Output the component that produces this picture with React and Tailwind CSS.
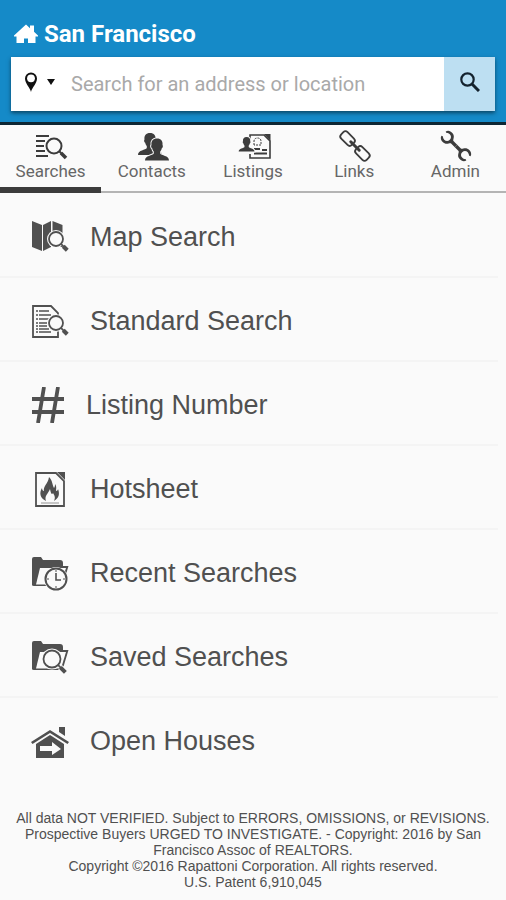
import React from "react";

function Lens({ cx, cy, r, dx }) {
  return (
    <g>
      <circle cx={cx} cy={cy} r={r + 2} fill="#fafafa" stroke="none" />
      <path
        d={`M${cx + r * 0.75 + 2} ${cy + r * 0.75 + 2}l${dx} ${dx}`}
        stroke="#fafafa"
        strokeWidth="6"
      />
      <circle cx={cx} cy={cy} r={r} fill="#fafafa" stroke="currentColor" strokeWidth="1.8" />
      <path d={`M${cx + r * 0.7} ${cy + r * 0.7}l3 3`} stroke="currentColor" strokeWidth="1.8" />
      <path d={`M${cx + r * 0.75 + 2} ${cy + r * 0.75 + 2}l${dx} ${dx}`} stroke="currentColor" strokeWidth="4" />
    </g>
  );
}

function HouseIcon() {
  return (
    <svg className="h-5 w-6" viewBox="0 0 24 20" fill="currentColor" aria-hidden="true">
      <path d="M0 11.500L12 .5l4 3.700V1.500h4v6.200l4 3.800v1h-2.500V19H14v-4.500h-4V19H2.500v-6.500H0z" />
    </svg>
  );
}

function PinIcon() {
  return (
    <svg className="h-5 w-3" viewBox="0 0 12 20" aria-hidden="true">
      <path d="M6 20C5 15.500 0 11.500 0 6.500a6 6 0 0112 0C12 11.500 7 15.500 6 20z" fill="#111" />
      <circle cx="6" cy="6.300" r="3.900" fill="#fff" />
    </svg>
  );
}

function SearchesIcon() {
  return (
    <svg className="h-7 w-8 overflow-visible" viewBox="0 0 32 28" fill="none" stroke="currentColor" aria-hidden="true">
      <path d="M1 5h13M1 10h9M1 15h8M1 20h9M1 25h12" strokeWidth="2.200" />
      <circle cx="19" cy="15" r="7.500" strokeWidth="2" />
      <path d="M24 20l3 3" strokeWidth="2" />
      <path d="M26 22l5 5" strokeWidth="3.500" />
    </svg>
  );
}

const PERSON =
  "M10 0c4 0 6 2.500 5.500 6.500.8.500.3 3-.7 3.200-.4 1.800-1 2.600-1.600 3.300v2c1 2 8.800 2 8.800 7H-2c0-5 7.800-5 8.800-7v-2c-.6-.7-1.200-1.500-1.600-3.300-1-.2-1.500-2.700-.7-3.200C4 2.500 6 0 10 0z";

function ContactsIcon() {
  return (
    <svg className="h-7 w-8 overflow-visible" viewBox="0 -2 32 28" fill="currentColor" aria-hidden="true">
      <path d={PERSON} transform="translate(4 0)" />
      <path d={PERSON} transform="translate(11 5.500)" stroke="#fafafa" strokeWidth="2" paintOrder="stroke" />
    </svg>
  );
}

function ListingsIcon() {
  return (
    <svg className="h-7 w-8 overflow-visible" viewBox="-1 -1 32 28" fill="none" stroke="currentColor" aria-hidden="true">
      <path d="M12 7V3h14l6 6v17H12v-4" strokeWidth="1.600" />
      <path d="M26 2h6.500v7z" fill="currentColor" stroke="none" />
      <path d="M16 13V9c0-4 7-4 7 0v4z" strokeWidth="1" strokeDasharray="2 1" />
      <path d="M16 17h6M24 18h5M16 21.500h13" strokeWidth="2.200" />
      <path
        d={PERSON}
        transform="translate(2 5) scale(.66)"
        fill="currentColor"
        stroke="#fafafa"
        strokeWidth="3"
        paintOrder="stroke"
      />
    </svg>
  );
}

function LinksIcon() {
  return (
    <svg className="h-8 w-8 overflow-visible" viewBox="-1 -1 32 32" fill="none" stroke="currentColor" strokeWidth="1.800" aria-hidden="true">
      <g transform="translate(16 16) rotate(45)">
        <rect x="-18" y="-4.500" width="15" height="9" rx="3" />
        <rect x="3" y="-4.500" width="15" height="9" rx="3" />
        <path d="M-6 0H6" strokeWidth="3" strokeLinecap="round" />
      </g>
    </svg>
  );
}

const JAW = "M0-1.900H6C8-2.500 8-7 13-7.500c3.500-.3 6 1 7 4l-1.500.8c-3.500-3-8.500-1.800-8.500 2.700s5 5.700 8.500 2.700l1.500.8c-1 3-3.500 4.300-7 4C8 7 8 2.500 6 1.900H0z";

function WrenchIcon() {
  return (
    <svg className="h-8 w-8 overflow-visible" viewBox="-1 -1 32 32" fill="currentColor" aria-hidden="true">
      <g transform="translate(16 16) rotate(45) scale(.88)">
        <path d={JAW} />
        <path d={JAW} transform="scale(-1 1)" />
      </g>
    </svg>
  );
}

function MapIcon() {
  return (
    <svg className="h-9 w-9 overflow-visible" viewBox="0 0 36 36" aria-hidden="true">
      <path d="M0 2l10 4v26l-10-4zM11 6l8-4v26l-8 4zM20.500 2l10 4v22l-10-1z" fill="currentColor" />
      <Lens cx={24} cy={20} r={7} dx={4} />
    </svg>
  );
}

function StandardIcon() {
  return (
    <svg className="h-9 w-9 overflow-visible" viewBox="0 -1 36 36" fill="none" stroke="currentColor" aria-hidden="true">
      <path d="M1 2h18l7 7v24H1z" strokeWidth="1.800" />
      <path d="M4 7h2m1 0h10M4 11h2m1 0h12M4 15h2m1 0h10M4 19h2m1 0h8M4 22h2m1 0h8M4 25h2m1 0h10M4 28h2m1 0h12" strokeWidth="1.500" />
      <Lens cx={24} cy={19} r={7} dx={4} />
    </svg>
  );
}

function HashIcon() {
  return (
    <svg className="h-9 w-8" viewBox="0 0 32 36" fill="none" stroke="currentColor" strokeWidth="3.800" aria-hidden="true">
      <path d="M12 0L6 36M26 0l-6 36M0 12h32M0 25h32" />
    </svg>
  );
}

function HotsheetIcon() {
  return (
    <svg className="h-9 w-9 overflow-visible" viewBox="0 -1 36 36" fill="none" stroke="currentColor" aria-hidden="true">
      <path d="M4 1h20l8 8v25H4z" strokeWidth="1.800" />
      <path d="M25 0h8v8z" fill="currentColor" stroke="none" />
      <path
        d="M14 29c-6-3-7-8-4-13 0 2 1 3 2 3-1-5 4-7 5-14 4 4 3 8 5 11 1-1 1-3 1-4 2 3 1 5 1 7 1 0 2-1 2-2 2 5 1 9-4 12 2-4 0-6-1-8-1 2-2 1-3-4-2 5-6 7-4 12z"
        fill="currentColor"
        stroke="none"
      />
      <path d="M9 31h18" strokeWidth="1" opacity=".6" />
    </svg>
  );
}

function Folder() {
  return (
    <g>
      <path d="M0 29V3q0-2 2-2h7l2 3h17q3 0 3 3v3h5.500l-6 20H2q-2 0-2-1z" fill="currentColor" />
      <path d="M8 12h26l-5 16.500H4z" fill="#fafafa" />
    </g>
  );
}

function RecentIcon() {
  return (
    <svg className="h-9 w-9 overflow-visible" viewBox="0 -1 36 36" fill="none" aria-hidden="true">
      <Folder />
      <circle cx="24" cy="23" r="12" fill="#fafafa" />
      <circle cx="24" cy="23" r="10.500" stroke="currentColor" strokeWidth="2" />
      <path d="M24 17v7h5" stroke="currentColor" strokeWidth="1.600" />
      <path d="M24 14v2m9 7h-2m-7 9v-2m-9-7h2" stroke="currentColor" />
    </svg>
  );
}

function SavedIcon() {
  return (
    <svg className="h-9 w-9 overflow-visible" viewBox="0 -1 36 36" aria-hidden="true">
      <Folder />
      <Lens cx={20} cy={19} r={8.5} dx={5} />
    </svg>
  );
}

function OpenHouseIcon() {
  return (
    <svg className="h-9 w-9 overflow-visible" viewBox="0 -2 36 36" fill="currentColor" aria-hidden="true">
      <path d="M-1 17L18 5l19 12-1.500 2L18 8 .5 19zM27 2h6v9l-6-4z" />
      <path d="M4 19l14-9 14 9v14H4z" />
      <path d="M8 21h12v-4l9 7-9 6v-4H8z" fill="#fafafa" />
    </svg>
  );
}

const TABS = [
  { label: "Searches", Icon: SearchesIcon },
  { label: "Contacts", Icon: ContactsIcon },
  { label: "Listings", Icon: ListingsIcon },
  { label: "Links", Icon: LinksIcon },
  { label: "Admin", Icon: WrenchIcon },
];

const ITEMS = [
  { label: "Map Search", Icon: MapIcon },
  { label: "Standard Search", Icon: StandardIcon },
  { label: "Listing Number", Icon: HashIcon },
  { label: "Hotsheet", Icon: HotsheetIcon },
  { label: "Recent Searches", Icon: RecentIcon },
  { label: "Saved Searches", Icon: SavedIcon },
  { label: "Open Houses", Icon: OpenHouseIcon },
];

export default function App() {
  return (
    <div className="min-h-screen bg-[#fafafa] font-['Liberation_Sans',Arial,sans-serif] text-[#505050]">
      <header className="border-b-3 border-[#0d2633] bg-[#158ac8] px-[11px] pt-[22px] pb-[11px]">
        <h1 className="flex h-6 items-center gap-[6px] pl-[3px] font-[Roboto,sans-serif] text-2xl font-bold text-white">
          <HouseIcon />
          San Francisco
        </h1>
        <form
          className="mt-[11px] flex h-[54px] bg-white shadow-[0_2px_4px_rgba(0,0,0,0.5)]"
          onSubmit={(e) => e.preventDefault()}
        >
          <button type="button" aria-label="Location type" className="flex w-[60px] shrink-0 items-center gap-[10px] pb-1 pl-[14px]">
            <PinIcon />
            <svg className="h-[6px] w-2" viewBox="0 0 8 6" aria-hidden="true">
              <path d="M0 0h8L4 6z" fill="#111" />
            </svg>
          </button>
          <input
            type="text"
            aria-label="Search for an address or location"
            placeholder="Search for an address or location"
            className="min-w-0 flex-1 font-[Roboto,sans-serif] text-xl text-[#444] outline-none placeholder:text-[#a9a9a9]"
          />
          <button type="submit" aria-label="Search" className="flex w-[51px] shrink-0 items-center justify-center bg-[#bddff2] pb-1">
            <svg className="h-5 w-5" viewBox="0 0 20 20" fill="none" stroke="#14222e" aria-hidden="true">
              <circle cx="7.500" cy="7.500" r="6.200" strokeWidth="2.200" />
              <path d="M12 12l7 7" strokeWidth="3" />
            </svg>
          </button>
        </form>
      </header>

      <nav className="grid h-[68px] grid-cols-5 border-b-2 border-[#b4b4b4]">
        {TABS.map(({ label, Icon }, i) => (
          <button
            key={label}
            type="button"
            aria-current={i === 0 ? "page" : undefined}
            className="relative flex flex-col items-center pt-1 font-[Roboto,sans-serif] text-[17px] leading-5 text-[#666] aria-[current=page]:after:absolute aria-[current=page]:after:inset-x-0 aria-[current=page]:after:-bottom-[2px] aria-[current=page]:after:h-[6px] aria-[current=page]:after:bg-[#3c3c3c]"
          >
            <span className="flex h-8 items-center text-[#3c3c3c]">
              <Icon />
            </span>
            {label}
          </button>
        ))}
      </nav>

      <ul className="pt-px pr-2">
        {ITEMS.map(({ label, Icon }) => (
          <li key={label} className="border-b-2 border-[#f4f4f4] last:border-transparent">
            <a href="#" className="flex h-[82px] items-center gap-[22px] pt-1 pl-8 text-[27px]">
              <Icon />
              {label}
            </a>
          </li>
        ))}
      </ul>

      <footer className="px-1 pt-7 pb-2 text-center text-sm leading-4">
        <p>
          All data NOT VERIFIED. Subject to ERRORS, OMISSIONS, or REVISIONS.
          <br />
          Prospective Buyers URGED TO INVESTIGATE. - Copyright: 2016 by San
          <br />
          Francisco Assoc of REALTORS.
        </p>
        <p>Copyright ©2016 Rapattoni Corporation. All rights reserved.</p>
        <p>U.S. Patent 6,910,045</p>
      </footer>
    </div>
  );
}
